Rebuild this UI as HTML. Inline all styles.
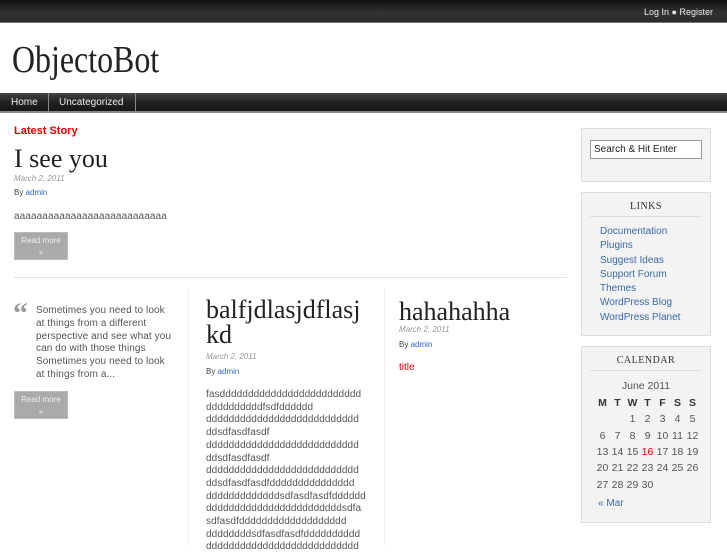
<!DOCTYPE html>
<html><head><meta charset="utf-8"><style>
*{margin:0;padding:0;box-sizing:border-box}
body{width:727px;height:545px;overflow:hidden;background:#fff;font-family:"Liberation Sans",sans-serif;position:relative;color:#444}
.a{position:absolute;white-space:nowrap}
.top{position:absolute;left:0;top:0;width:727px;height:23px;background:linear-gradient(#111,#333 60%,#2a2a2a);border-bottom:1px solid #777}
.nav{position:absolute;left:0;top:93px;width:727px;height:20px;background:linear-gradient(#444,#222 50%,#151515);border-bottom:2px solid #888}
.nav span{position:absolute;top:0;height:20px;line-height:20px;color:#eee;font-size:10px;border-right:1px solid #888}
.serif{font-family:"Liberation Serif",serif;color:#222}
.btn{position:absolute;width:54px;height:28px;background:#aaa;border:1px solid #bbb;color:#eee;font-size:8px;text-align:center;line-height:12px;padding-top:2px}
.date{font-size:8px;font-style:italic;color:#999}
.by{font-size:8px;color:#444}.by b{font-weight:normal;color:#36c}
.box{position:absolute;left:581px;width:130px;background:#f3f3f3;border:1px solid #ddd}
.body{font-size:10px;line-height:12.7px;color:#555;letter-spacing:.1px}
.link{color:#3a6aa8;font-size:10px;line-height:14.3px}
.cal{font-size:10px;color:#555}
table.c{position:absolute;left:595px;top:394px;border-collapse:collapse;font-size:10.5px;color:#555}
table.c td,table.c th{width:15px;height:16.4px;text-align:center;padding:0}
table.c th{color:#333;height:17px}
</style></head><body>
<div class="top"></div>
<div class="a" style="right:14px;top:7px;font-size:9px;color:#eee">Log In ● Register</div>
<div class="a serif" style="left:12px;top:38px;font-size:38px;color:#222;transform:scaleX(0.84);transform-origin:left">ObjectoBot</div>
<div class="nav"><span style="left:0;width:49px;padding-left:11px">Home</span><span style="left:49px;width:87px;padding-left:10px">Uncategorized</span></div>

<div class="a" style="left:14px;top:125px;font-size:11px;font-weight:bold;color:#d00">Latest Story</div>
<div class="a serif" style="left:14px;top:144px;font-size:26px">I see you</div>
<div class="a date" style="left:14px;top:174px">March 2, 2011</div>
<div class="a by" style="left:14px;top:188px">By <b>admin</b></div>
<div class="a body" style="left:14px;top:211px">aaaaaaaaaaaaaaaaaaaaaaaaaaa</div>
<div class="btn" style="left:14px;top:232px">Read more<br>»</div>
<div class="a" style="left:14px;top:277px;width:553px;height:1px;background:#e3e3e3"></div>

<div class="a" style="left:13px;top:299px;font-size:30px;color:#999;font-family:'Liberation Serif',serif;font-weight:bold;line-height:30px">“</div>
<div class="a body" style="left:36px;top:305px;line-height:12.8px">Sometimes you need to look<br>at things from a different<br>perspective and see what you<br>can do with those things<br>Sometimes you need to look<br>at things from a...</div>
<div class="btn" style="left:14px;top:391px">Read more<br>»</div>

<div class="a" style="left:188px;top:288px;width:1px;height:257px;background:#eee"></div>
<div class="a" style="left:384px;top:288px;width:1px;height:257px;background:#eee"></div>

<div class="a serif" style="left:206px;top:297px;font-size:26px;line-height:25px">balfjdlasjdflasj<br>kd</div>
<div class="a date" style="left:206px;top:352px">March 2, 2011</div>
<div class="a by" style="left:206px;top:367px">By <b>admin</b></div>
<div class="a body" style="left:206px;top:389px">fasddddddddddddddddddddddddd<br>ddddddddddfsdfdddddd<br>ddddddddddddddddddddddddddd<br>ddsdfasdfasdf<br>ddddddddddddddddddddddddddd<br>ddsdfasdfasdf<br>ddddddddddddddddddddddddddd<br>ddsdfasdfasdfddddddddddddddd<br>dddddddddddddsdfasdfasdfdddddd<br>ddddddddddddddddddddddddsdfa<br>sdfasdfddddddddddddddddddd<br>ddddddddsdfasdfasdfdddddddddd<br>ddddddddddddddddddddddddddd</div>

<div class="a serif" style="left:399px;top:297px;font-size:26px">hahahahha</div>
<div class="a date" style="left:399px;top:325px">March 2, 2011</div>
<div class="a by" style="left:399px;top:340px">By <b>admin</b></div>
<div class="a" style="left:399px;top:362px;font-size:10px;color:#d00">title</div>

<div class="box" style="top:128px;height:54px"><div style="position:absolute;left:8px;top:11px;width:112px;height:19px;background:#fff;border:1px solid #999;font-size:10px;color:#222;padding:3px 3px">Search &amp; Hit Enter</div></div>
<div class="box" style="top:192px;height:144px">
<div class="a serif" style="left:0;width:128px;text-align:center;top:8px;font-size:10px;color:#333;letter-spacing:.5px">LINKS</div>
<div class="a" style="left:8px;top:23px;width:112px;height:1px;background:#ddd"></div>
<div class="a link" style="left:18px;top:32px">Documentation<br>Plugins<br>Suggest Ideas<br>Support Forum<br>Themes<br>WordPress Blog<br>WordPress Planet</div></div>
<div class="box" style="top:346px;height:177px">
<div class="a serif" style="left:0;width:128px;text-align:center;top:8px;font-size:10px;color:#333;letter-spacing:.5px">CALENDAR</div>
<div class="a" style="left:8px;top:23px;width:112px;height:1px;background:#ddd"></div>
<div class="a cal" style="left:0;width:128px;text-align:center;top:33px;font-size:10.5px">June 2011</div>
<div class="a link" style="left:16px;top:150px">« Mar</div>
</div>
<table class="c">
<tr><th>M</th><th>T</th><th>W</th><th>T</th><th>F</th><th>S</th><th>S</th></tr>
<tr><td></td><td></td><td>1</td><td>2</td><td>3</td><td>4</td><td>5</td></tr>
<tr><td>6</td><td>7</td><td>8</td><td>9</td><td>10</td><td>11</td><td>12</td></tr>
<tr><td>13</td><td>14</td><td>15</td><td style="color:#d00">16</td><td>17</td><td>18</td><td>19</td></tr>
<tr><td>20</td><td>21</td><td>22</td><td>23</td><td>24</td><td>25</td><td>26</td></tr>
<tr><td>27</td><td>28</td><td>29</td><td>30</td><td></td><td></td><td></td></tr>
</table>
</body></html>
